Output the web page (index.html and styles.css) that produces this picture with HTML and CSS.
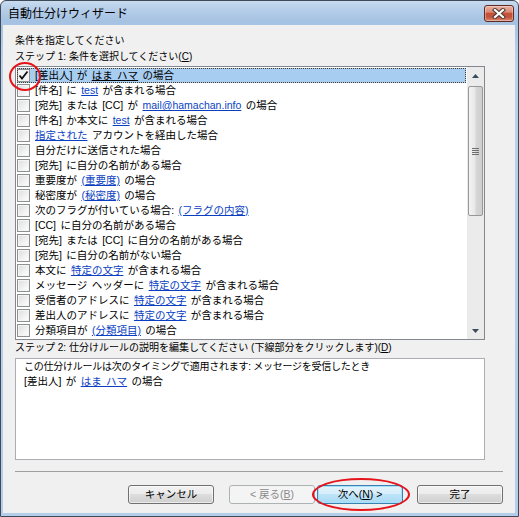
FILE: index.html
```html
<!DOCTYPE html>
<html lang="ja">
<head>
<meta charset="utf-8">
<title>自動仕分けウィザード</title>
<link rel="stylesheet" href="styles.css">
</head>
<body>
<div class="window">
  <div class="titlebar">
    <span class="title">自動仕分けウィザード</span>
    <button class="close" aria-label="閉じる">
      <svg width="16" height="11" viewBox="0 0 16 11">
        <path d="M4 2 L12 9 M12 2 L4 9" stroke="#4a3a36" stroke-width="4.2" stroke-linecap="square" fill="none"/>
        <path d="M4 2 L12 9 M12 2 L4 9" stroke="#ffffff" stroke-width="2.2" stroke-linecap="square" fill="none"/>
      </svg>
    </button>
  </div>
  <div class="client">
    <div class="label first">条件を指定してください</div>
    <div class="label">ステップ 1: 条件を選択してください(<u>C</u>)</div>
    <div class="listbox">
      <div class="rows">
        <div class="row selected"><span class="cb checked"><svg width="11" height="11" viewBox="0 0 11 11"><path d="M1.5 5.5 L4 8.5 L9.5 1.5" stroke="#111" stroke-width="1.8" fill="none"/></svg></span><span class="txt">[差出人] が <span class="lnk-sel">はま ハマ</span> の場合</span></div>
        <div class="row"><span class="cb"></span><span class="txt">[件名] に <a class="lnk">test</a> が含まれる場合</span></div>
        <div class="row"><span class="cb"></span><span class="txt">[宛先] または [CC] が <a class="lnk">mail@hamachan.info</a> の場合</span></div>
        <div class="row"><span class="cb"></span><span class="txt">[件名] か本文に <a class="lnk">test</a> が含まれる場合</span></div>
        <div class="row"><span class="cb"></span><span class="txt"><a class="lnk">指定された</a> アカウントを経由した場合</span></div>
        <div class="row"><span class="cb"></span><span class="txt">自分だけに送信された場合</span></div>
        <div class="row"><span class="cb"></span><span class="txt">[宛先] に自分の名前がある場合</span></div>
        <div class="row"><span class="cb"></span><span class="txt">重要度が <a class="lnk">(重要度)</a> の場合</span></div>
        <div class="row"><span class="cb"></span><span class="txt">秘密度が <a class="lnk">(秘密度)</a> の場合</span></div>
        <div class="row"><span class="cb"></span><span class="txt">次のフラグが付いている場合: <a class="lnk">(フラグの内容)</a></span></div>
        <div class="row"><span class="cb"></span><span class="txt">[CC] に自分の名前がある場合</span></div>
        <div class="row"><span class="cb"></span><span class="txt">[宛先] または [CC] に自分の名前がある場合</span></div>
        <div class="row"><span class="cb"></span><span class="txt">[宛先] に自分の名前がない場合</span></div>
        <div class="row"><span class="cb"></span><span class="txt">本文に <a class="lnk">特定の文字</a> が含まれる場合</span></div>
        <div class="row"><span class="cb"></span><span class="txt">メッセージ ヘッダーに <a class="lnk">特定の文字</a> が含まれる場合</span></div>
        <div class="row"><span class="cb"></span><span class="txt">受信者のアドレスに <a class="lnk">特定の文字</a> が含まれる場合</span></div>
        <div class="row"><span class="cb"></span><span class="txt">差出人のアドレスに <a class="lnk">特定の文字</a> が含まれる場合</span></div>
        <div class="row"><span class="cb"></span><span class="txt">分類項目が <a class="lnk">(分類項目)</a> の場合</span></div>
      </div>
      <div class="scrollbar">
        <div class="sb-btn"><svg width="7" height="4" viewBox="0 0 7 4"><path d="M0 4 L3.5 0 L7 4 Z" fill="#3b4a5c"/></svg></div>
        <div class="thumb"><span class="grip"></span></div>
        <div class="sb-btn bottom"><svg width="7" height="4" viewBox="0 0 7 4"><path d="M0 0 L7 0 L3.5 4 Z" fill="#3b4a5c"/></svg></div>
      </div>
    </div>
    <div class="label">ステップ 2: 仕分けルールの説明を編集してください (下線部分をクリックします)(<u>D</u>)</div>
    <div class="textbox">
      <div class="tb-line1">この仕分けルールは次のタイミングで適用されます: メッセージを受信したとき</div>
      <div class="tb-line2">[差出人] が <a class="lnk">はま ハマ</a> の場合</div>
    </div>
    <div class="separator"></div>
    <div class="buttons">
      <button class="btn cancel">キャンセル</button>
      <button class="btn back" disabled>&lt; 戻る(<u>B</u>)</button>
      <button class="btn next default">次へ(<u>N</u>) &gt;</button>
      <button class="btn finish">完了</button>
    </div>
  </div>
  <div class="mark mark-check"></div>
  <div class="mark mark-next"></div>
</div>
</body>
</html>
```
FILE: styles.css
```css
* { box-sizing: border-box; }
html, body { margin: 0; padding: 0; }
body {
  width: 519px;
  height: 517px;
  overflow: hidden;
  background: #ffffff;
  font-family: "Liberation Sans", "Noto Sans CJK JP", sans-serif;
  font-size: 10px;
  color: #000;
}
.window {
  position: relative;
  width: 519px;
  height: 517px;
  border: 1px solid #3e4a58;
  border-radius: 6px 6px 0 0;
  background: linear-gradient(180deg, #c8dbef 0px, #b3cce8 10px, #a6c2e2 20px, #b8d1ec 60px, #b4cdea 100%);
  padding: 0 3px 3px 2px;
  display: flex;
  flex-direction: column;
}
.titlebar {
  height: 24px;
  display: flex;
  align-items: flex-start;
  padding: 4px 1px 0 5px;
}
.title {
  font-family: "Noto Sans CJK JP", sans-serif;
  font-size: 12px;
  line-height: 16px;
  color: #000;
}
.close {
  margin-left: auto;
  width: 30px;
  height: 17px;
  border: 1px solid #5d2b22;
  border-radius: 3px;
  padding: 0;
  display: flex;
  align-items: center;
  justify-content: center;
  background: linear-gradient(180deg, #eab1a3 0%, #dc8a74 40%, #c4513a 50%, #c5543c 75%, #de8b74 100%);
  box-shadow: inset 0 0 0 1px rgba(255,255,255,0.35);
}
.client {
  flex: 1;
  background: #f0f0f0;
  padding: 8px 12px 0 12px;
  display: flex;
  flex-direction: column;
}
.label {
  line-height: 16px;
  height: 16px;
  white-space: nowrap;
}
.listbox {
  margin-top: 1px;
  width: 470px;
  height: 274px;
  border: 1px solid #828790;
  background: #fff;
  display: flex;
}
.rows {
  flex: 1;
  padding: 1px 1px 0 1px;
  display: flex;
  flex-direction: column;
}
.row {
  height: 15px;
  display: flex;
  align-items: center;
  white-space: nowrap;
  line-height: 15px;
  font-size: 10.5px;
  word-spacing: 1.5px;
}
.row.selected {
  background: #a7cdf0;
  outline: 1px dotted #4a3b2a;
  outline-offset: -1px;
}
.cb {
  width: 13px;
  height: 13px;
  border: 1px solid #8e8f8f;
  background: linear-gradient(135deg, #dcdcdc 0%, #f6f6f6 70%, #ffffff 100%);
  box-shadow: inset 0 0 0 1px #f4f4f4;
  flex: none;
  display: flex;
  align-items: center;
  justify-content: center;
}
.cb.checked {
  background: #f4f4f4;
}
.txt {
  margin-left: 5px;
}
.lnk {
  color: #0a3fc2;
  text-decoration: underline;
}
.lnk-sel {
  text-decoration: underline;
}
.scrollbar {
  width: 17px;
  flex: none;
  background: #ebebeb;
  display: flex;
  flex-direction: column;
  align-items: center;
}
.sb-btn {
  width: 17px;
  height: 17px;
  display: flex;
  align-items: center;
  justify-content: center;
}
.sb-btn.bottom {
  margin-top: auto;
}
.thumb {
  margin-top: 2px;
  width: 15px;
  height: 130px;
  border: 1px solid #979797;
  border-radius: 2px;
  background: linear-gradient(90deg, #f3f3f3 0%, #e8e8e8 45%, #d6d6d6 55%, #cfcfcf 100%);
  display: flex;
  align-items: center;
  justify-content: center;
}
.grip {
  width: 7px;
  height: 7px;
  background: repeating-linear-gradient(180deg, #6e6e6e 0px, #6e6e6e 1px, transparent 1px, transparent 2px);
}
.textbox {
  margin-top: 2px;
  width: 470px;
  height: 102px;
  border: 1px solid #abadb3;
  background: #fff;
  padding: 0 8px;
  line-height: 15px;
  white-space: nowrap;
}
.tb-line1 {
  letter-spacing: -0.25px;
}
.tb-line2 {
  font-size: 10.5px;
  word-spacing: 1.5px;
}
.separator {
  margin-top: 11px;
  height: 1px;
  background: #a0a0a0;
}
.buttons {
  margin-top: 13px;
  display: flex;
  justify-content: flex-end;
}
.btn {
  width: 86px;
  height: 19px;
  padding: 0;
  font-family: inherit;
  font-size: 10.5px;
  line-height: 17px;
  color: #000;
  border: 1px solid #707070;
  border-radius: 3px;
  background: linear-gradient(180deg, #f2f2f2 0%, #ebebeb 50%, #dddddd 50%, #cfcfcf 100%);
  box-shadow: inset 0 0 0 1px rgba(255,255,255,0.6);
}
.cancel { margin-right: 15px; }
.back {
  margin-right: 2px;
  color: #8a8a8a;
  border-color: #adb2b5;
  background: #f4f4f4;
  box-shadow: none;
}
.next {
  margin-right: 14px;
  border-color: #3c7fb1;
  background: linear-gradient(180deg, #e5f4fc 0%, #d4edfb 50%, #bde4f8 50%, #a9daf5 100%);
  box-shadow: inset 0 0 0 1px #a6e1fb;
}
.mark {
  position: absolute;
  border: 2px solid #e5141b;
  border-radius: 50%;
  pointer-events: none;
}
.mark-check {
  left: 8px;
  top: 61px;
  width: 32px;
  height: 29px;
}
.mark-next {
  left: 311px;
  top: 477px;
  width: 98px;
  height: 33px;
}
```
